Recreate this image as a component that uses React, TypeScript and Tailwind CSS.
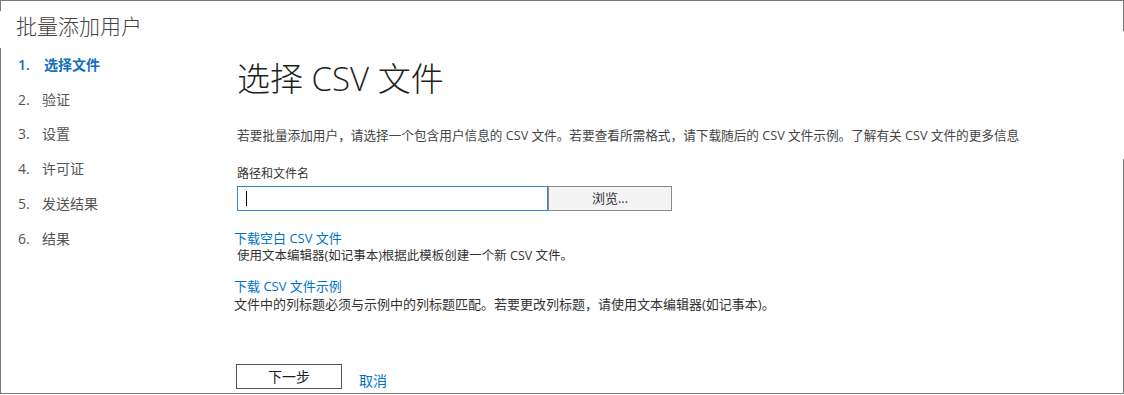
const FONT = { fontFamily: '"Segoe UI", "Open Sans", "Noto Sans CJK SC", sans-serif' };

const STEPS = ['选择文件', '验证', '设置', '许可证', '发送结果', '结果'];

function Sidebar() {
  return (
    <nav className="w-[237px] shrink-0 pt-[2px]">
      {STEPS.map((s, i) => {
        const active = i === 0;
        return (
          <div
            key={s}
            className={`flex h-[34.8px] items-center pl-[18px] text-[14px] ${active ? 'font-semibold text-[#106ebe]' : 'text-[#555555]'}`}
          >
            <span className={active ? 'w-[26px]' : 'w-[24px]'}>{i + 1}.</span>
            <span>{s}</span>
          </div>
        );
      })}
    </nav>
  );
}

function FilePicker() {
  return (
    <div className="mt-[2px] flex h-[25px] w-[435px]">
      <div className="relative w-[311px] border border-[#2b88d8] bg-white">
        <span className="absolute left-[8px] top-[4px] h-[15px] w-px bg-black" />
      </div>
      <button className="flex-1 border border-[#8a8a8a] bg-[#f4f4f4] text-[13px] text-[#333333]">浏览...</button>
    </div>
  );
}

export default function App() {
  return (
    <div className="relative h-[394px] w-[1124px] border-t border-b border-[#7a7a7a] bg-white" style={FONT}>
      {/* broken side edges of the captured dialog */}
      <span className="absolute left-0 top-0 h-[10px] w-px bg-[#7a7a7a]" />
      <span className="absolute bottom-0 left-0 top-[47px] w-px bg-[#7a7a7a]" />
      <span className="absolute right-0 top-0 h-[30px] w-px bg-[#7a7a7a]" />
      <span className="absolute bottom-0 right-0 top-[158px] w-px bg-[#7a7a7a]" />

      <header className="h-[44px] pl-[16px] pt-[11px]">
        <h1 className="text-[21px] font-light leading-[28px] text-[#444444]">批量添加用户</h1>
      </header>

      <div className="flex">
        <Sidebar />
        <main className="pt-[14px] text-[13px] text-[#333333]">
          <h2 className="text-[33px] font-light leading-[40px] text-[#201f1e]">选择 CSV 文件</h2>
          <p className="mt-[26px] text-[12.65px] leading-[20px] text-[#444444]">
            若要批量添加用户，请选择一个包含用户信息的 CSV 文件。若要查看所需格式，请下载随后的 CSV 文件示例。了解有关 CSV 文件的更多信息
          </p>
          <p className="mt-[19px] text-[12px] leading-[20px]">路径和文件名</p>
          <FilePicker />

          <a className="-ml-[3px] mt-[18px] block leading-[18px] text-[#0072c6]">下载空白 CSV 文件</a>
          <p className="text-[12.5px] leading-[18px]">使用文本编辑器(如记事本)根据此模板创建一个新 CSV 文件。</p>
          <a className="-ml-[3px] mt-[12px] block leading-[18px] text-[#0072c6]">下载 CSV 文件示例</a>
          <p className="-ml-[3px] leading-[18px]">文件中的列标题必须与示例中的列标题匹配。若要更改列标题，请使用文本编辑器(如记事本)。</p>

          <div className="mt-[49px] flex items-center">
            <button className="-ml-[1px] h-[25px] w-[106px] border border-[#555555] bg-white text-[14px] text-[#222222]">下一步</button>
            <a className="ml-[17px] mt-[8px] text-[14px] text-[#0072c6]">取消</a>
          </div>
        </main>
      </div>
    </div>
  );
}
